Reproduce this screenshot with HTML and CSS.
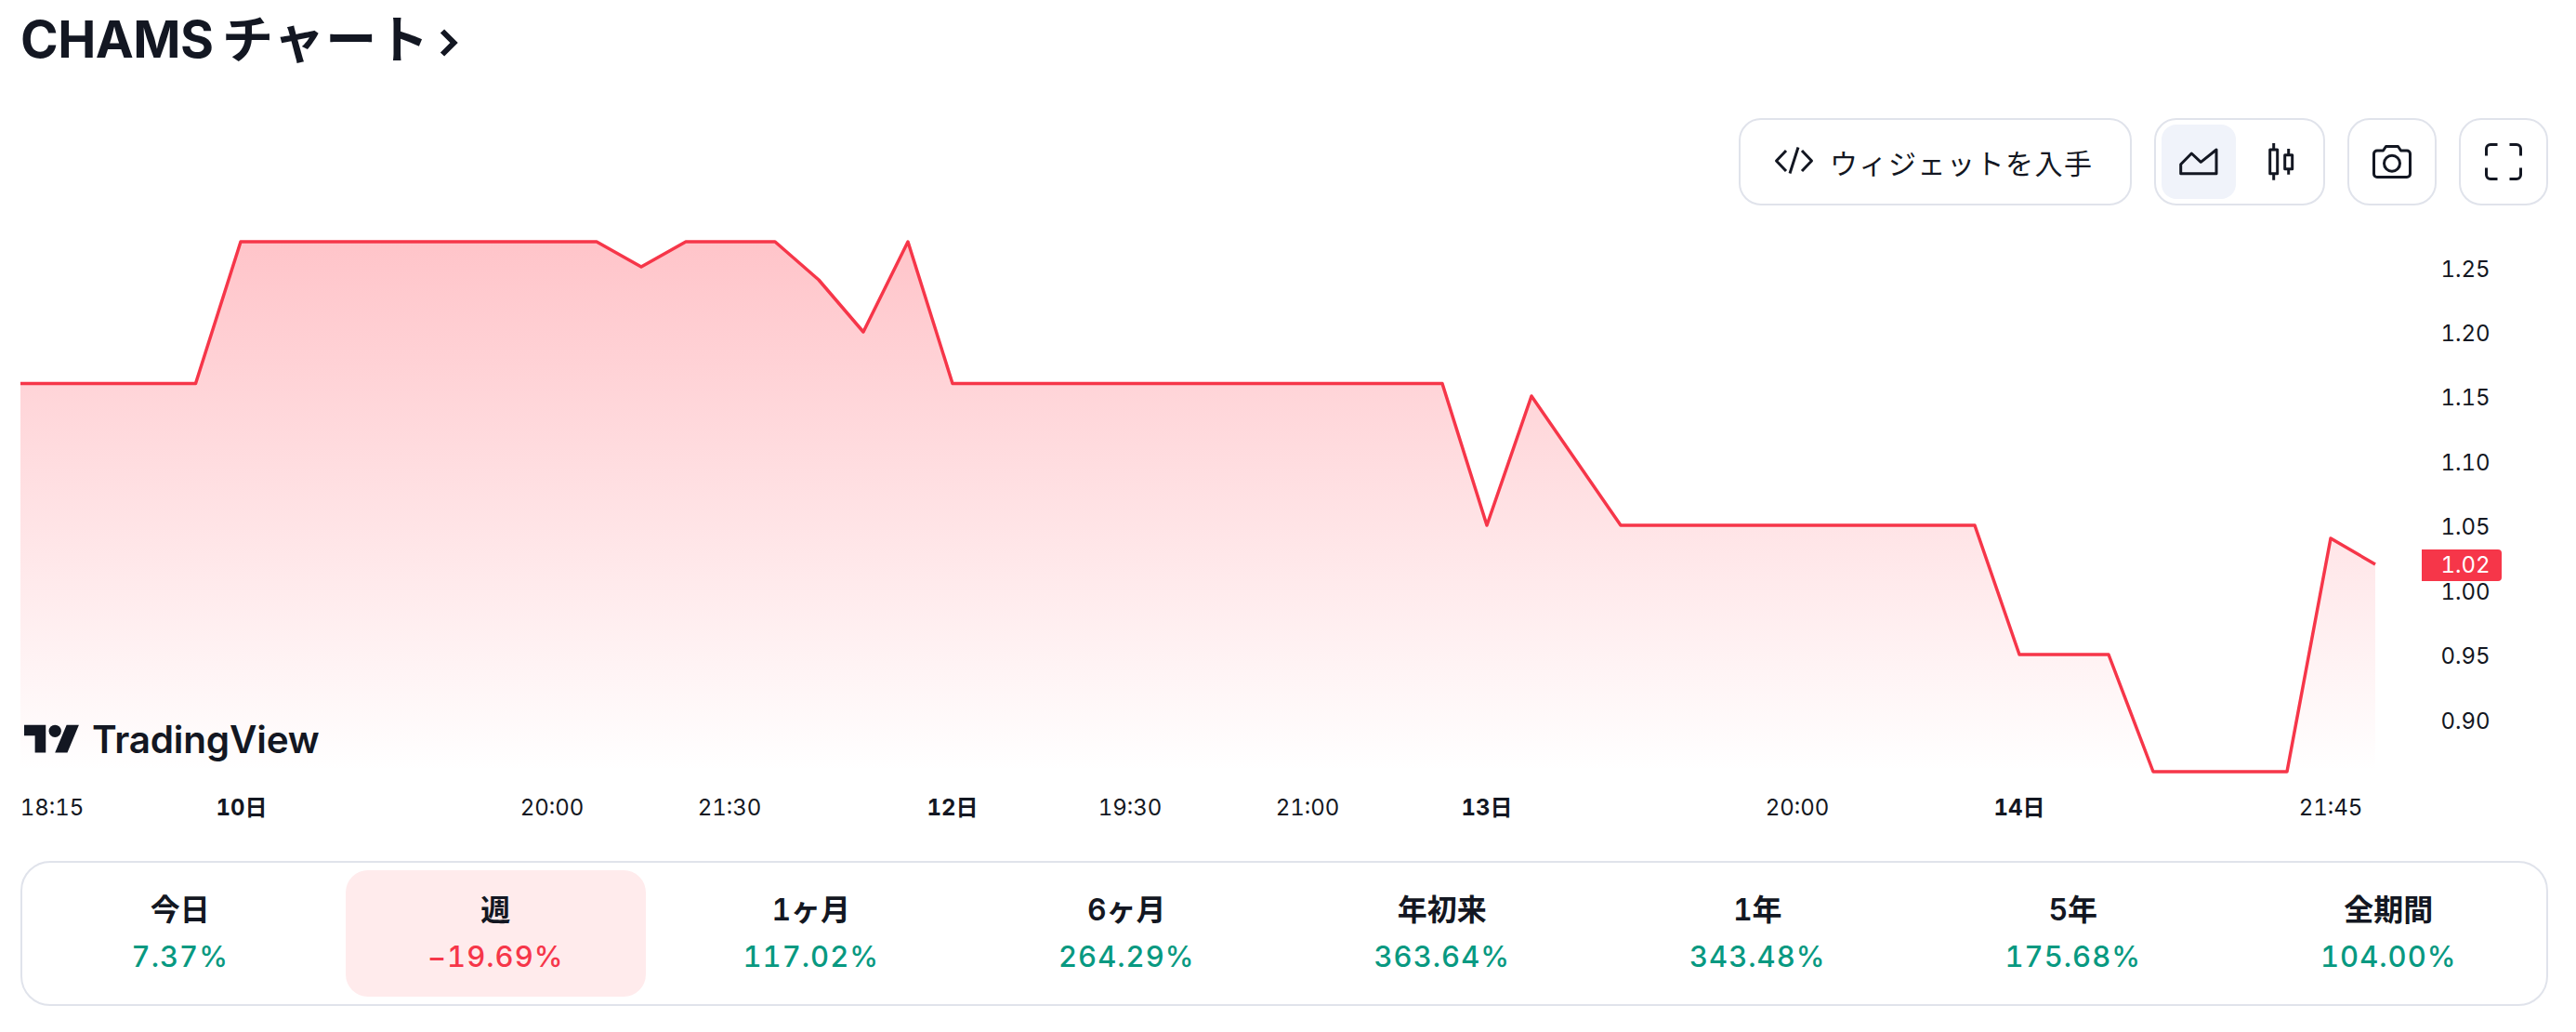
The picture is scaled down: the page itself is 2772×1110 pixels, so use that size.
FILE: index.html
```html
<!DOCTYPE html>
<html lang="ja">
<head>
<meta charset="utf-8">
<title>CHAMS チャート</title>
<link rel="stylesheet" href="styles.css">
</head>
<body>
<main class="page">
  <h1 class="title"><span>CHAMS <span class="kana">チャート</span></span><svg class="chev" width="20" height="30" viewBox="0 0 20 30"><path d="M3 2.500 15.500 15 3 27.500" fill="none" stroke="#131722" stroke-width="6"/></svg></h1>

  <div class="toolbar">
    <button class="btn btn-wide">
      <svg class="icon" width="48" height="48" viewBox="0 0 48 48"><path d="M15 12 4.500 23 15 34M28 8.500 19 36.500M32 12 42.500 23 32 34" /></svg>
      <span>ウィジェットを入手</span>
    </button>
    <div class="btn group">
      <span class="seg seg-on"><svg class="icon" width="48" height="48" viewBox="0 0 48 48"><path d="M4.700 36.700V26.700L16.300 15 26.300 24.300 43 11V36.700Z"/></svg></span>
      <span class="seg"><svg class="icon" width="48" height="48" viewBox="0 0 48 48"><path d="M12.700 11H20.700V36.700H12.700ZM16.700 4V11M16.700 36.700V43.700M28.700 16.700H36.700V31.700H28.700ZM32.700 10V16.700M32.700 31.700V37.700"/></svg></span>
    </div>
    <button class="btn btn-icon"><svg class="icon" width="48" height="48" viewBox="0 0 48 48"><path d="M8 12h6.500l3-4.500h13l3 4.500H40a3.500 3.500 0 0 1 3.500 3.500v21.500a3.500 3.500 0 0 1-3.500 3.500H8a3.500 3.500 0 0 1-3.500-3.500V15.500A3.500 3.500 0 0 1 8 12z"/><circle cx="24" cy="25.700" r="8.500"/></svg></button>
    <button class="btn btn-icon"><svg class="icon" width="48" height="48" viewBox="0 0 48 48"><path d="M17.500 5.500H10a4.500 4.500 0 0 0-4.500 4.500v7.500M30.500 5.500H38a4.500 4.500 0 0 1 4.500 4.500v7.500M17.500 42.500H10a4.500 4.500 0 0 1-4.500-4.500v-7.500M30.500 42.500H38a4.500 4.500 0 0 0 4.500-4.500v-7.500"/></svg></button>
  </div>

  <svg class="chart" width="2720" height="680" viewBox="22 230 2720 680">
    <defs>
      <linearGradient id="areaFill" x1="0" y1="260" x2="0" y2="830" gradientUnits="userSpaceOnUse">
        <stop offset="0" stop-color="#ff3b4c" stop-opacity="0.3"/>
        <stop offset="1" stop-color="#ff3b4c" stop-opacity="0"/>
      </linearGradient>
    </defs>
    <polygon class="area" points="22,412.500 210.500,412.500 259,260 642,260 690,287 738,260 834,260 881,301 929,357 977,260 1025,412.500 1552,412.500 1600,565 1648,426 1744,565 2125,565 2173,704 2269,704 2317,830 2461,830 2508,579 2556,607 2556,830 22,830"/>
    <polyline class="line" points="22,412.500 210.500,412.500 259,260 642,260 690,287 738,260 834,260 881,301 929,357 977,260 1025,412.500 1552,412.500 1600,565 1648,426 1744,565 2125,565 2173,704 2269,704 2317,830 2461,830 2508,579 2556,607"/>

    <g class="logo">
      <g transform="translate(26 773) scale(1.660)"><path d="M14 22H7V11H0V4h14v18zM28 22h-8l7.500-18h8L28 22z"/><circle cx="20" cy="8" r="4"/></g>
      <text class="logo-text" x="99" y="810">TradingView</text>
    </g>

    <g class="axis-y">
      <text x="2653" y="298">1.25</text>
      <text x="2653" y="367">1.20</text>
      <text x="2653" y="436">1.15</text>
      <text x="2653" y="506">1.10</text>
      <text x="2653" y="575">1.05</text>
      <text x="2653" y="645">1.00</text>
      <text x="2653" y="714">0.95</text>
      <text x="2653" y="784">0.90</text>
    </g>
    <path class="tag" d="M2606 591H2688a4 4 0 0 1 4 4V621a4 4 0 0 1-4 4H2606Z"/>
    <text class="tag-text" x="2653" y="616">1.02</text>

    <g class="axis-x">
      <text x="56" y="877">18:15</text>
      <text class="day" x="260" y="877">10日</text>
      <text x="594" y="877">20:00</text>
      <text x="785" y="877">21:30</text>
      <text class="day" x="1025" y="877">12日</text>
      <text x="1216" y="877">19:30</text>
      <text x="1407" y="877">21:00</text>
      <text class="day" x="1600" y="877">13日</text>
      <text x="1934" y="877">20:00</text>
      <text class="day" x="2173" y="877">14日</text>
      <text x="2508" y="877">21:45</text>
    </g>
  </svg>

  <div class="stats">
    <div class="stat"><span class="label">今日</span><span class="value up">7.37%</span></div>
    <div class="stat stat-on"><span class="label">週</span><span class="value down">−19.69%</span></div>
    <div class="stat"><span class="label">1ヶ月</span><span class="value up">117.02%</span></div>
    <div class="stat"><span class="label">6ヶ月</span><span class="value up">264.29%</span></div>
    <div class="stat"><span class="label">年初来</span><span class="value up">363.64%</span></div>
    <div class="stat"><span class="label">1年</span><span class="value up">343.48%</span></div>
    <div class="stat"><span class="label">5年</span><span class="value up">175.68%</span></div>
    <div class="stat"><span class="label">全期間</span><span class="value up">104.00%</span></div>
  </div>
</main>
</body>
</html>
```
FILE: styles.css
```css
* { box-sizing: border-box; }
html, body { margin: 0; padding: 0; background: #fff; }
body {
  font-family: Inter, "Noto Sans CJK JP", sans-serif;
  color: #131722;
  font-feature-settings: "tnum" 1;
}
.page { padding: 0 30px 0 22px; }

.title {
  margin: 0;
  height: 84px;
  font-size: 55px;
  line-height: 84px;
  font-weight: 700;
  display: flex;
  align-items: center;
  letter-spacing: -0.5px;
  word-spacing: -5px;
}
.kana { letter-spacing: 1px; }
.chev { margin: 8px 0 0 11px; }

.toolbar {
  margin-top: 43px;
  display: flex;
  justify-content: flex-end;
  gap: 24px;
}
.btn {
  height: 94px;
  border: 2px solid #e0e3eb;
  border-radius: 24px;
  background: #fff;
  color: inherit;
  font: inherit;
  padding: 0;
  display: flex;
  align-items: center;
}
.btn-wide {
  width: 423px;
  padding-left: 34px;
  font-size: 30px;
  letter-spacing: 1.5px;
  gap: 14px;
}
.btn-icon { width: 96px; justify-content: center; }
.group { width: 184px; padding: 5px 6px; gap: 8px; }
.seg {
  width: 80px;
  height: 80px;
  border-radius: 16px;
  display: flex;
  align-items: center;
  justify-content: center;
}
.seg-on { background: #f0f3fa; }
.icon {
  display: block;
  fill: none;
  stroke: #131722;
  stroke-width: 3;
  stroke-linejoin: round;
}

.chart { display: block; margin-top: 9px; }
.area { fill: url(#areaFill); }
.line { fill: none; stroke: #f63649; stroke-width: 3.5; stroke-linejoin: round; }
.logo { fill: #131722; }
.logo-text {
  font-size: 40.5px;
  font-weight: 600;
  letter-spacing: -0.2px;
}
.axis-y text, .axis-x text, .tag-text {
  font-size: 24px;
  text-anchor: middle;
  fill: #131722;
}
.axis-x .day { font-weight: 700; }
.tag { fill: #f63649; }
.tag-text { fill: #fff; }

.stats {
  margin-top: 16px;
  height: 156px;
  border: 2px solid #e0e3eb;
  border-radius: 32px;
  padding: 8px;
  display: flex;
  gap: 16px;
}
.stat {
  flex: 1 1 0;
  border-radius: 24px;
  display: flex;
  flex-direction: column;
  align-items: center;
  padding-top: 23px;
  gap: 10px;
}
.stat-on { background: #ffebec; }
.label { font-size: 32px; line-height: 40px; font-weight: 600; }
.value { font-size: 31px; line-height: 40px; font-weight: 500; letter-spacing: 1px; }
.up { color: #089981; }
.down { color: #f63649; }
```
